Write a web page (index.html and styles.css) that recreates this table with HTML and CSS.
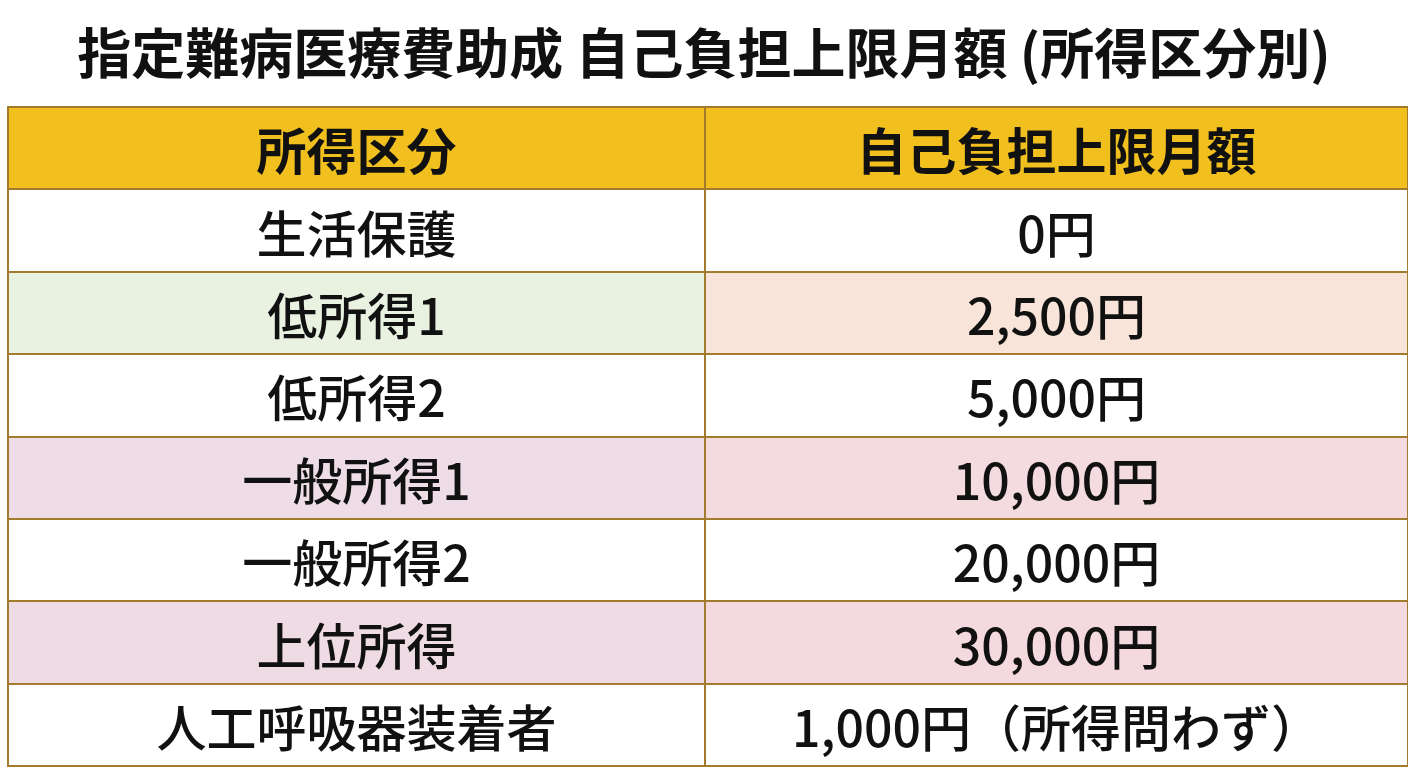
FILE: index.html
```html
<!DOCTYPE html>
<html lang="ja">
<head>
<meta charset="utf-8">
<link rel="stylesheet" href="styles.css">
</head>
<body>
<h1 class="title">指定難病医療費助成 自己負担上限月額 (所得区分別)</h1>
<table class="limits">
  <colgroup><col class="c1"><col class="c2"></colgroup>
  <thead>
    <tr><th>所得区分</th><th>自己負担上限月額</th></tr>
  </thead>
  <tbody>
    <tr class="white"><td>生活保護</td><td>0円</td></tr>
    <tr class="green"><td>低所得1</td><td>2,500円</td></tr>
    <tr class="white"><td>低所得2</td><td>5,000円</td></tr>
    <tr class="pink"><td>一般所得1</td><td>10,000円</td></tr>
    <tr class="white"><td>一般所得2</td><td>20,000円</td></tr>
    <tr class="pink2"><td>上位所得</td><td>30,000円</td></tr>
    <tr class="white"><td>人工呼吸器装着者</td><td>1,000円（所得問わず）</td></tr>
  </tbody>
</table>
</body>
</html>
```
FILE: styles.css
```css
html, body {
  margin: 0;
  padding: 0;
  background: #ffffff;
}
body {
  font-family: "Noto Sans CJK JP", "Noto Sans", sans-serif;
  color: #111111;
}
.title {
  margin: 0;
  height: 106px;
  display: flex;
  align-items: center;
  justify-content: center;
  font-size: 54px;
  font-weight: 700;
  line-height: 1;
  padding-bottom: 4px;
  box-sizing: border-box;
}
.limits {
  margin-left: 7px;
  width: 1400px;
  border-collapse: collapse;
  table-layout: fixed;
  border: 2px solid #a27c2c;
}
.c1 { width: 697px; }
.c2 { width: 703px; }
.limits th, .limits td {
  border: 2px solid #a27c2c;
  height: 80.4px;
  padding: 0;
  text-align: center;
  vertical-align: middle;
  font-size: 50px;
  line-height: 1;
}
.limits th {
  background: #f2c01e;
  font-weight: 700;
}
.limits td {
  font-weight: 500;
}
.white td { background: #ffffff; }
.green td:first-child { background: #e9f1e0; }
.green td:last-child { background: #f9e4da; }
.pink td:first-child { background: #eedde6; }
.pink td:last-child { background: #f4dbe0; }
.pink2 td:first-child { background: #eedbe4; }
.pink2 td:last-child { background: #f4d9df; }
```
